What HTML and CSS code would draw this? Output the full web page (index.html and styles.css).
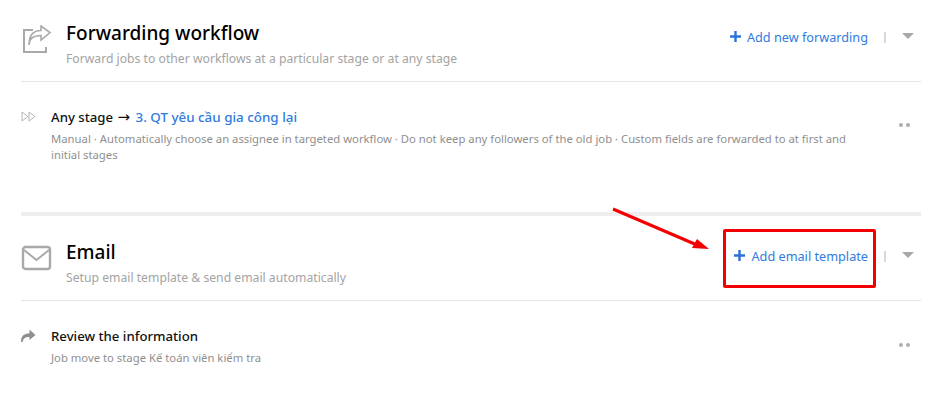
FILE: index.html
```html
<!DOCTYPE html>
<html lang="en">
<head>
<meta charset="utf-8">
<title>Workflow settings</title>
<link rel="stylesheet" href="styles.css">
</head>
<body>
<main class="page">
  <section class="section section-forward">
    <header class="head">
      <svg class="head-icon" width="32" height="30" viewBox="0 0 32 30" fill="none" stroke="#a9a9a9" stroke-width="2"><path d="M11 5H2v22h22v-5"/><path stroke-width="1.6" d="M7 20c0-6 4-9.500 12-9.500V15l9-7.500L19 1v4.500C11 5.500 7 11 7 20z"/></svg>
      <div class="head-text">
        <h2 class="title">Forwarding workflow</h2>
        <p class="subtitle">Forward jobs to other workflows at a particular stage or at any stage</p>
      </div>
      <div class="actions">
        <a class="add"><svg class="plus" width="11" height="11" viewBox="0 0 11 11"><path d="M4.300 0h2.400v4.300H11v2.400H6.700V11H4.300V6.700H0V4.300h4.300z"/></svg>Add new forwarding</a>
        <span class="sep"></span>
        <span class="caret"></span>
      </div>
    </header>
    <div class="item item-forward">
      <svg class="item-icon" width="15" height="11" viewBox="0 0 15 11" fill="none" stroke="#b4b4b4"><path d="M1 1v9l6-4.500zM8 1v9l6-4.500z"/></svg>
      <div class="item-text">
        <h3 class="item-title">Any stage <span class="arrow">→</span> <a class="link">3. QT yêu cầu gia công lại</a></h3>
        <p class="item-desc">Manual · Automatically choose an assignee in targeted workflow · Do not keep any followers of the old job · Custom fields are forwarded to at first and initial stages</p>
      </div>
      <span class="dots"><i></i><i></i></span>
    </div>
  </section>
  <section class="section section-email">
    <header class="head">
      <svg class="head-icon" width="32" height="26" viewBox="0 0 32 26" fill="none" stroke="#a9a9a9" stroke-width="2.400"><rect x="2" y="2" width="27" height="22" rx="2.500"/><path stroke-width="2" d="M3 5l12.500 10L28 5"/></svg>
      <div class="head-text">
        <h2 class="title">Email</h2>
        <p class="subtitle">Setup email template &amp; send email automatically</p>
      </div>
      <div class="actions">
        <a class="add"><svg class="plus" width="11" height="11" viewBox="0 0 11 11"><path d="M4.300 0h2.400v4.300H11v2.400H6.700V11H4.300V6.700H0V4.300h4.300z"/></svg>Add email template</a>
        <span class="sep"></span>
        <span class="caret"></span>
      </div>
    </header>
    <div class="item item-email">
      <svg class="item-icon" width="16" height="13" viewBox="0 0 16 13" fill="#8f8f8f"><path d="M1 13C1 7.500 3.500 4.500 9.500 4.300V0.500L15.500 6l-6 5V8C5.500 8 3.500 9 2.500 13z"/></svg>
      <div class="item-text">
        <h3 class="item-title">Review the information</h3>
        <p class="item-desc">Job move to stage Kế toán viên kiểm tra</p>
      </div>
      <span class="dots"><i></i><i></i></span>
    </div>
  </section>
  <div class="callout-box"></div>
  <svg class="callout-arrow" width="100" height="45" viewBox="0 0 100 45"><path d="M1 2l84 36" stroke="#f50000" stroke-width="3" fill="none"/><path d="M85 32l-5 9 17 1z" fill="#f50000"/></svg>
</main>
</body>
</html>
```

FILE: styles.css
```css
* { box-sizing: border-box; }
html, body { margin: 0; padding: 0; background: #fff; }
body {
  width: 935px;
  height: 402px;
  overflow: hidden;
  font-family: "Noto Sans", "Open Sans", "Liberation Sans", sans-serif;
  color: #000;
}
.page { position: relative; padding: 0 14px 0 21px; }
.section-forward { height: 216px; border-bottom: 4px solid #eeeeee; }

.head {
  display: flex;
  align-items: flex-start;
  border-bottom: 1px solid #e5e5e5;
}
.section-forward .head { height: 82px; padding-top: 21px; }
.section-email .head { height: 85px; padding-top: 24px; }
.head-icon { flex: none; margin-left: 1px; margin-top: 4px; }
.section-email .head-icon { margin-top: 5px; margin-left: 0; }
.head-text { margin-left: 12px; flex: 1; }
.section-email .head-text { margin-left: 13px; }
.title { margin: 0; font-size: 19px; line-height: 24px; font-weight: 500; }
.subtitle { margin: 5px 0 0; font-size: 12.200px; line-height: 17px; color: #a3a3a3; }

.actions { display: flex; align-items: center; height: 32px; }
.add { display: flex; align-items: center; font-size: 12.700px; color: #2f7be0; }
.plus { fill: #2a72d6; margin-right: 6px; position: relative; top: -1px; }
.sep { width: 2px; height: 11px; background: #d8d8d8; margin-left: 16px; }
.caret {
  width: 0; height: 0; margin: 0 7px 3px 16px;
  border-left: 6px solid transparent;
  border-right: 6px solid transparent;
  border-top: 6px solid #a8a8a8;
}

.item { display: flex; align-items: flex-start; }
.item-forward { padding-top: 26px; }
.item-email { padding-top: 26px; }
.item-icon { flex: none; margin-top: 3px; }
.item-email .item-icon { margin-left: -1px; margin-top: 2px; }
.item-text { margin-left: 15px; width: 810px; flex: none; }
.item-title { margin: 0; font-size: 13.200px; line-height: 18px; font-weight: 500; color: #111; }
.arrow { font-family: "DejaVu Sans", sans-serif; font-size: 15px; line-height: 1; font-weight: 400; margin: 0 2px 0 1px; }
.link { color: #2f7be0; font-size: 13.400px; }
.item-desc { margin: 5px 0 0; font-size: 11.300px; line-height: 16px; color: #8f8f8f; }
.dots { display: flex; gap: 3px; margin-left: auto; margin-right: 11px; margin-top: 15px; }
.item-email .dots { margin-top: 16px; }
.dots i { display: block; width: 4px; height: 4px; border-radius: 50%; background: #aeaeae; }

.callout-box {
  position: absolute;
  left: 723px; top: 229px;
  width: 153px; height: 59px;
  border: 3px solid #f50000;
  border-radius: 2px;
}
.callout-arrow { position: absolute; left: 612px; top: 207px; }
```
